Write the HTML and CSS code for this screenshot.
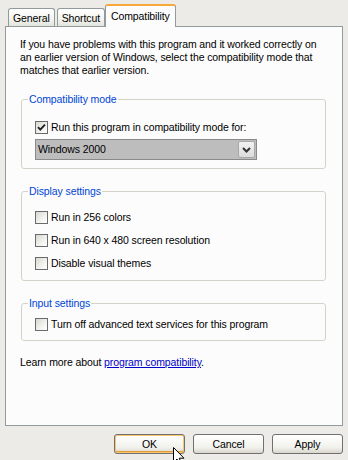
FILE: index.html
```html
<!DOCTYPE html>
<html lang="en">
<head>
    <meta charset="UTF-8">
    <title>Properties - Compatibility</title>
    <link rel="stylesheet" href="styles.css">
</head>
<body>
<div class="dialog">
    <div class="tabs">
        <div class="tab">General</div>
        <div class="tab">Shortcut</div>
        <div class="tab active">Compatibility</div>
    </div>
    <div class="panel">
        <p class="intro">If you have problems with this program and it worked correctly on<br>
            an earlier version of Windows, select the compatibility mode that<br>
            matches that earlier version.</p>

        <fieldset class="group group-mode">
            <legend>Compatibility mode</legend>
            <div class="row">
                <span class="checkbox checked">
                    <svg width="11" height="11" viewBox="0 0 11 11"><path d="M2 5.2 L4.3 7.6 L9 2.6" fill="none" stroke="#222" stroke-width="1.9"/></svg>
                </span>
                <span>Run this program in compatibility mode for:</span>
            </div>
            <div class="select">
                <span class="select-value">Windows 2000</span>
                <span class="select-btn">
                    <svg width="9" height="6" viewBox="0 0 9 6"><path d="M1 1 L4.5 4.5 L8 1" fill="none" stroke="#333" stroke-width="2"/></svg>
                </span>
            </div>
        </fieldset>

        <fieldset class="group group-display">
            <legend>Display settings</legend>
            <div class="row"><span class="checkbox"></span><span>Run in 256 colors</span></div>
            <div class="row"><span class="checkbox"></span><span>Run in 640 x 480 screen resolution</span></div>
            <div class="row"><span class="checkbox"></span><span>Disable visual themes</span></div>
        </fieldset>

        <fieldset class="group group-input">
            <legend>Input settings</legend>
            <div class="row"><span class="checkbox"></span><span>Turn off advanced text services for this program</span></div>
        </fieldset>

        <p class="learn">Learn more about <a href="#">program compatibility</a>.</p>
    </div>
    <div class="buttons">
        <div class="btn btn-default">OK</div>
        <div class="btn">Cancel</div>
        <div class="btn">Apply</div>
    </div>
</div>
<svg class="cursor" width="12" height="19" viewBox="0 0 12 19">
    <path d="M0.5 0.5 L0.5 15.5 L4 12 L6.5 18 L8.7 17 L6.2 11.2 L11 11.2 Z" fill="#fff" stroke="#000" stroke-width="1"/>
</svg>
</body>
</html>
```

FILE: styles.css
```css
body {
    margin: 0;
    width: 348px;
    height: 460px;
    overflow: hidden;
    position: relative;
    background: #ecebe8;
    font-family: "Liberation Sans", Arial, sans-serif;
    font-size: 10.5px;
    letter-spacing: -0.1px;
    color: #000;
}
.dialog {
    padding: 5px 5px 0 5px;
}
.tabs {
    display: flex;
    align-items: flex-end;
    height: 22px;
    padding-left: 3px;
    margin-bottom: -1px;
    position: relative;
    z-index: 1;
}
.tab {
    box-sizing: border-box;
    height: 18px;
    margin-bottom: 1px;
    margin-right: 2px;
    padding: 2px 4px 0;
    line-height: 14px;
    border: 1px solid #919b9c;
    border-bottom: none;
    border-radius: 3px 3px 0 0;
    background: linear-gradient(#ffffff, #f3f3ef 60%, #e4e4de);
}
.tab.active {
    height: 23px;
    margin-bottom: 0;
    margin-left: -2px;
    padding: 3px 5px 0;
    border-top: 2px solid #f6a93a;
    background: #fcfcfc;
}
.panel {
    box-sizing: border-box;
    height: 400px;
    padding: 11px 16px 0 15px;
    border: 1px solid #919b9c;
    background: #fcfcfc;
}
.intro {
    margin: 0 0 16px -1px;
    line-height: 13px;
}
.group {
    margin: 0;
    padding: 0 12px 8px 13px;
    border: 1px solid #d5d3c8;
    border-radius: 3px;
}
.group legend {
    margin-left: -7px;
    padding: 0 1px;
    line-height: 13px;
    color: #0046d5;
}
.group-mode {
    padding-top: 15px;
}
.group-display {
    margin-top: 16px;
    padding-top: 13px;
    padding-bottom: 10px;
    display: flex;
    flex-direction: column;
    gap: 10px;
}
.group-input {
    margin-top: 16px;
    padding-top: 8px;
    padding-bottom: 9px;
}
.row {
    display: flex;
    align-items: center;
    gap: 3px;
    height: 13px;
    line-height: 13px;
}
.checkbox {
    box-sizing: border-box;
    width: 13px;
    height: 13px;
    border: 1px solid #6b6b6b;
    background: linear-gradient(135deg, #d9d9d3, #f6f6f3 70%, #fff);
    display: flex;
    align-items: center;
    justify-content: center;
}
.select {
    box-sizing: border-box;
    display: flex;
    width: 222px;
    height: 21px;
    margin-top: 5px;
    border: 1px solid #8a8a8a;
    background: #bdbdbd;
}
.select-value {
    flex: 1;
    padding-left: 2px;
    line-height: 19px;
}
.select-btn {
    box-sizing: border-box;
    width: 17px;
    margin: 1px;
    border: 1px solid #a8a8a8;
    border-radius: 2px;
    background: linear-gradient(#f2f2f2, #dcdcdc);
    display: flex;
    align-items: center;
    justify-content: center;
}
.learn {
    margin: 15px 0 0 -1px;
    line-height: 13px;
}
.learn a {
    color: #0000c8;
}
.buttons {
    display: flex;
    justify-content: flex-end;
    gap: 8px;
    margin-top: 8px;
}
.btn {
    box-sizing: border-box;
    width: 71px;
    height: 20px;
    line-height: 18px;
    text-align: center;
    border: 1px solid #707070;
    border-radius: 3px;
    background: linear-gradient(#ffffff, #f1f1ec 70%, #d8d5cc);
}
.btn-default {
    box-shadow: inset 0 0 0 1px #f9c66f, inset 0 -1px 0 1px #e69a38;
}
.cursor {
    position: absolute;
    left: 173px;
    top: 447px;
}
```
